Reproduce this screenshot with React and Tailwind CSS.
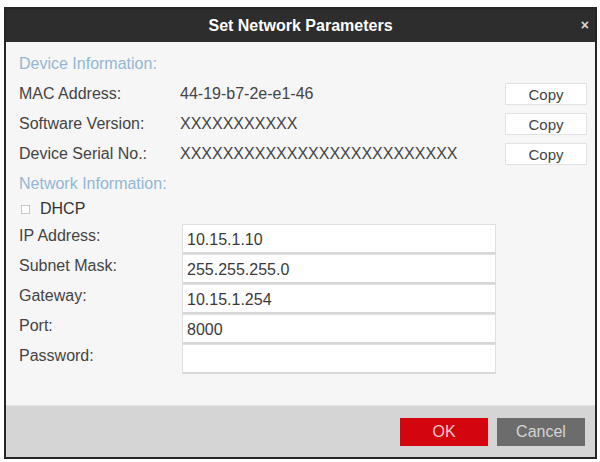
import React from "react";

const font = { fontFamily: '"Liberation Sans", Arial, sans-serif' };

const InfoRow = ({ label, value }) => (
  <div className="flex items-center h-[30px]">
    <span className="w-[161px] shrink-0 text-[#444]">{label}</span>
    <span className="flex-1 text-[#444]">{value}</span>
    <button className="w-[82px] h-[22px] bg-white border border-[#e2e2e2] text-[15px] text-[#444] mr-[8px]">
      Copy
    </button>
  </div>
);

const FieldRow = ({ label, value }) => (
  <div className="flex items-center h-[30px]">
    <span className="w-[163px] shrink-0 text-[#444] pb-[6px]">{label}</span>
    <div className="w-[314px] h-[30px] bg-white border border-[#e0e0e0] border-b-2 border-b-[#d8d8d8] flex items-center px-[4px] text-[#3a3a3a] pt-[3px]">
      {value}
    </div>
  </div>
);

export default function App() {
  return (
    <div className="w-[600px] h-[462px] bg-white pt-[7px] pl-[4px]" style={font}>
      <div className="w-[593px] h-[452px] border-2 border-[#262626] flex flex-col text-[16px] leading-none">
        {/* title bar */}
        <div className="relative h-[33px] bg-[#2d2d2d] flex items-center justify-center">
          <span className="text-white font-bold text-[16px]">Set Network Parameters</span>
          <span className="absolute right-[6px] top-[9px] text-[#d8d8d8] font-bold text-[14px]">×</span>
        </div>

        {/* body */}
        <div className="flex-1 bg-[#f6f6f6] pl-[13px] pt-[7px]">
          <div className="h-[30px] flex items-center text-[#93b6d4]">Device Information:</div>
          <InfoRow label="MAC Address:" value="44-19-b7-2e-e1-46" />
          <InfoRow label="Software Version:" value="XXXXXXXXXXX" />
          <InfoRow label="Device Serial No.:" value="XXXXXXXXXXXXXXXXXXXXXXXXXX" />
          <div className="h-[30px] flex items-center text-[#93b6d4]">Network Information:</div>
          <div className="h-[20px] flex items-center gap-[10px] text-[#333]">
            <span className="ml-[2px] w-[9px] h-[9px] border border-[#c8c8c8] bg-white" />
            <span>DHCP</span>
          </div>
          <div className="mt-[5px]">
            <FieldRow label="IP Address:" value="10.15.1.10" />
            <FieldRow label="Subnet Mask:" value="255.255.255.0" />
            <FieldRow label="Gateway:" value="10.15.1.254" />
            <FieldRow label="Port:" value="8000" />
            <FieldRow label="Password:" value="" />
          </div>
        </div>

        {/* footer */}
        <div className="h-[52px] bg-[#d5d5d5] border-t border-[#e4e4e4] flex items-center justify-end gap-[9px] pr-[10px]">
          <button className="w-[88px] h-[28px] bg-[#d3060f] text-[#f6caca]">OK</button>
          <button className="w-[88px] h-[28px] bg-[#6c6c6c] text-[#d4d4d4]">Cancel</button>
        </div>
      </div>
    </div>
  );
}
